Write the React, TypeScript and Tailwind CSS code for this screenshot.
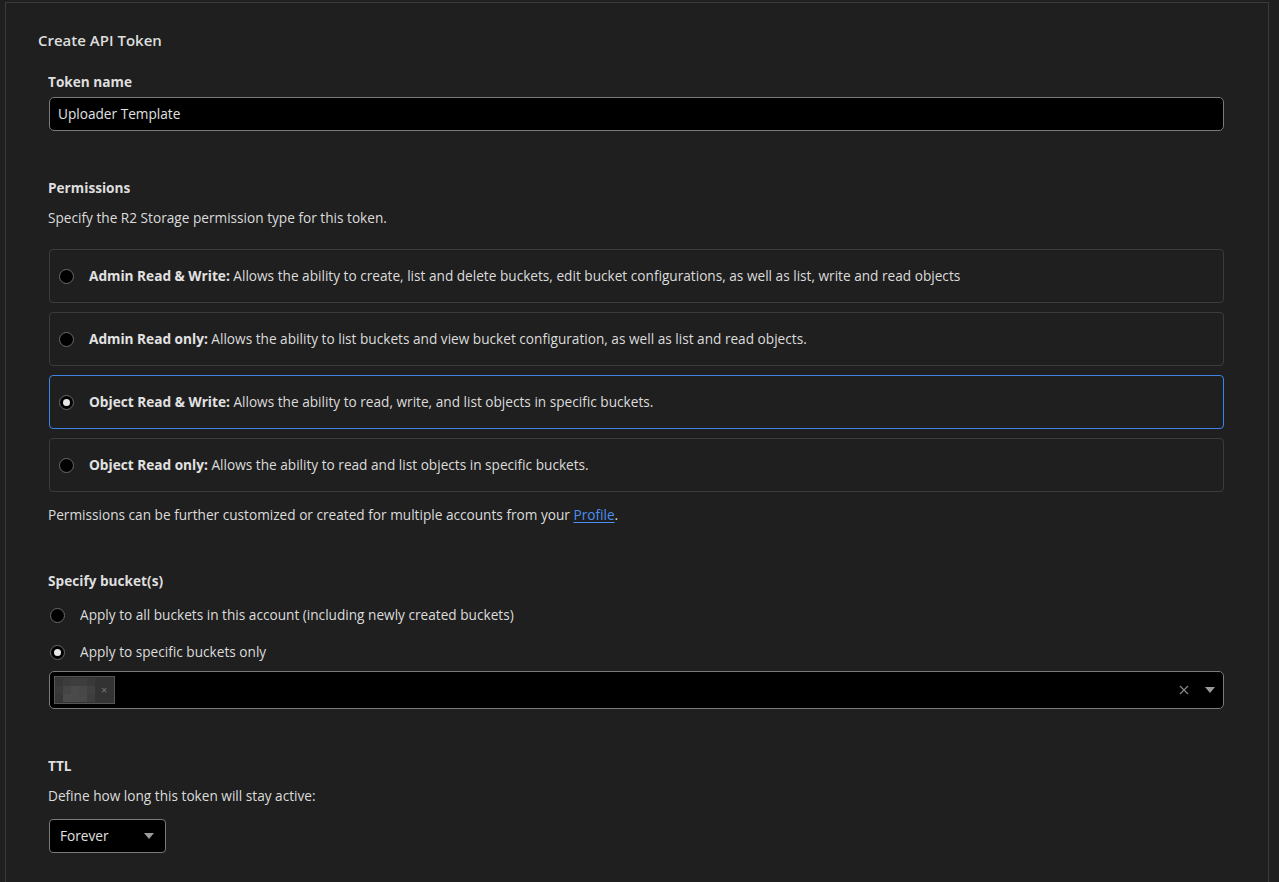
import React from "react";

const Radio = ({ checked }: { checked?: boolean }) => (
  <span className="flex h-[15px] w-[15px] shrink-0 items-center justify-center rounded-full border border-[#6b6b6b] bg-black">
    {checked && <span className="h-[7px] w-[7px] rounded-full bg-[#e8e8e8]" />}
  </span>
);

const cards = [
  {
    title: "Admin Read & Write:",
    text: "Allows the ability to create, list and delete buckets, edit bucket configurations, as well as list, write and read objects",
  },
  {
    title: "Admin Read only:",
    text: "Allows the ability to list buckets and view bucket configuration, as well as list and read objects.",
  },
  {
    title: "Object Read & Write:",
    text: "Allows the ability to read, write, and list objects in specific buckets.",
    checked: true,
  },
  {
    title: "Object Read only:",
    text: "Allows the ability to read and list objects in specific buckets.",
  },
];

export default function App() {
  return (
    <div
      className="min-h-screen w-full bg-[#1f1f1f] pt-[2px] text-[13.65px] text-[#dcdcdc]"
      style={{ fontFamily: "'Open Sans', Roboto, sans-serif" }}
    >
      <div className="ml-[5px] h-[880px] w-[1264px] border-l border-r border-t border-[#3a3a3a] pl-[32px] pr-[44px] pt-[25px]">
        <h1 className="text-[15px] font-semibold leading-[24px] text-[#dedede]">Create API Token</h1>
        <div className="pl-[10px]">
          <div className="mt-[20px] font-bold leading-[20px] text-[#dedede]">Token name</div>
          <div className="ml-[1px] mt-[5px] flex h-[34px] w-[1175px] items-center rounded-[5px] border border-[#7a7a7a] bg-black px-[8px] text-[#e0e0e0]">
            Uploader Template
          </div>

          <div className="mt-[47px] font-bold leading-[20px] text-[#dedede]">Permissions</div>
          <div className="mt-[10px] leading-[20px]">Specify the R2 Storage permission type for this token.</div>

          <div className="ml-[1px] mt-[21px] flex w-[1175px] flex-col gap-[9px]">
            {cards.map((c) => (
              <div
                key={c.title}
                className={
                  "flex h-[54px] items-center rounded-[4px] border pl-[9px] " +
                  (c.checked ? "border-[#3f84e5]" : "border-[#3b3b3b]")
                }
              >
                <Radio checked={c.checked} />
                <span className="ml-[15px] leading-[20px]">
                  <span className="font-bold text-[#e2e2e2]">{c.title}</span> {c.text}
                </span>
              </div>
            ))}
          </div>

          <div className="mt-[13px] leading-[20px]">
            Permissions can be further customized or created for multiple accounts from your{" "}
            <span className="text-[#4b8ff0] underline underline-offset-2">Profile</span>.
          </div>

          <div className="mt-[46px] font-bold leading-[20px] text-[#dedede]">Specify bucket(s)</div>
          <div className="ml-[2px] mt-[14px] flex h-[20px] items-center">
            <Radio />
            <span className="ml-[15px]">Apply to all buckets in this account (including newly created buckets)</span>
          </div>
          <div className="ml-[2px] mt-[17px] flex h-[20px] items-center">
            <Radio checked />
            <span className="ml-[15px]">Apply to specific buckets only</span>
          </div>

          <div className="ml-[1px] mt-[9px] flex h-[38px] w-[1175px] items-center rounded-[5px] border border-[#7a7a7a] bg-black pl-[4px] pr-[8px]">
            <div className="flex h-[28px] w-[61px] items-center border border-[#555] bg-[#333]">
              <div className="grid grid-cols-5 grid-rows-3">
                <span className="h-[8px] w-[8px] bg-[#363636]" />
                <span className="h-[8px] w-[8px] bg-[#3c3c3c]" />
                <span className="h-[8px] w-[8px] bg-[#3e3e3e]" />
                <span className="h-[8px] w-[8px] bg-[#3d3d3d]" />
                <span className="h-[8px] w-[8px] bg-[#393939]" />
                <span className="h-[8px] w-[8px] bg-[#3a3a3a]" />
                <span className="h-[8px] w-[8px] bg-[#454545]" />
                <span className="h-[8px] w-[8px] bg-[#4a4a4a]" />
                <span className="h-[8px] w-[8px] bg-[#474747]" />
                <span className="h-[8px] w-[8px] bg-[#404040]" />
                <span className="h-[8px] w-[8px] bg-[#373737]" />
                <span className="h-[8px] w-[8px] bg-[#4b4b4b]" />
                <span className="h-[8px] w-[8px] bg-[#4a4a4a]" />
                <span className="h-[8px] w-[8px] bg-[#484848]" />
                <span className="h-[8px] w-[8px] bg-[#3e3e3e]" />
              </div>
              <span className="ml-[6px] text-[11px] text-[#777]">×</span>
            </div>
            <div className="flex-1" />
            <svg width="10" height="10" viewBox="0 0 10 10" className="mr-[16px]">
              <path d="M1 1L9 9M9 1L1 9" stroke="#8a8a8a" strokeWidth="1.1" />
            </svg>
            <svg width="10" height="6" viewBox="0 0 10 6">
              <path d="M0 0H10L5 6Z" fill="#9a9a9a" />
            </svg>
          </div>

          <div className="mt-[47px] font-bold leading-[20px] text-[#dedede]">TTL</div>
          <div className="mt-[10px] leading-[20px]">Define how long this token will stay active:</div>
          <div className="ml-[1px] mt-[13px] flex h-[34px] w-[117px] items-center rounded-[4px] border border-[#7a7a7a] bg-black pl-[10px] pr-[11px] text-[#e0e0e0]">
            <span className="flex-1">Forever</span>
            <svg width="10" height="6" viewBox="0 0 10 6">
              <path d="M0 0H10L5 6Z" fill="#9a9a9a" />
            </svg>
          </div>
        </div>
      </div>
    </div>
  );
}
